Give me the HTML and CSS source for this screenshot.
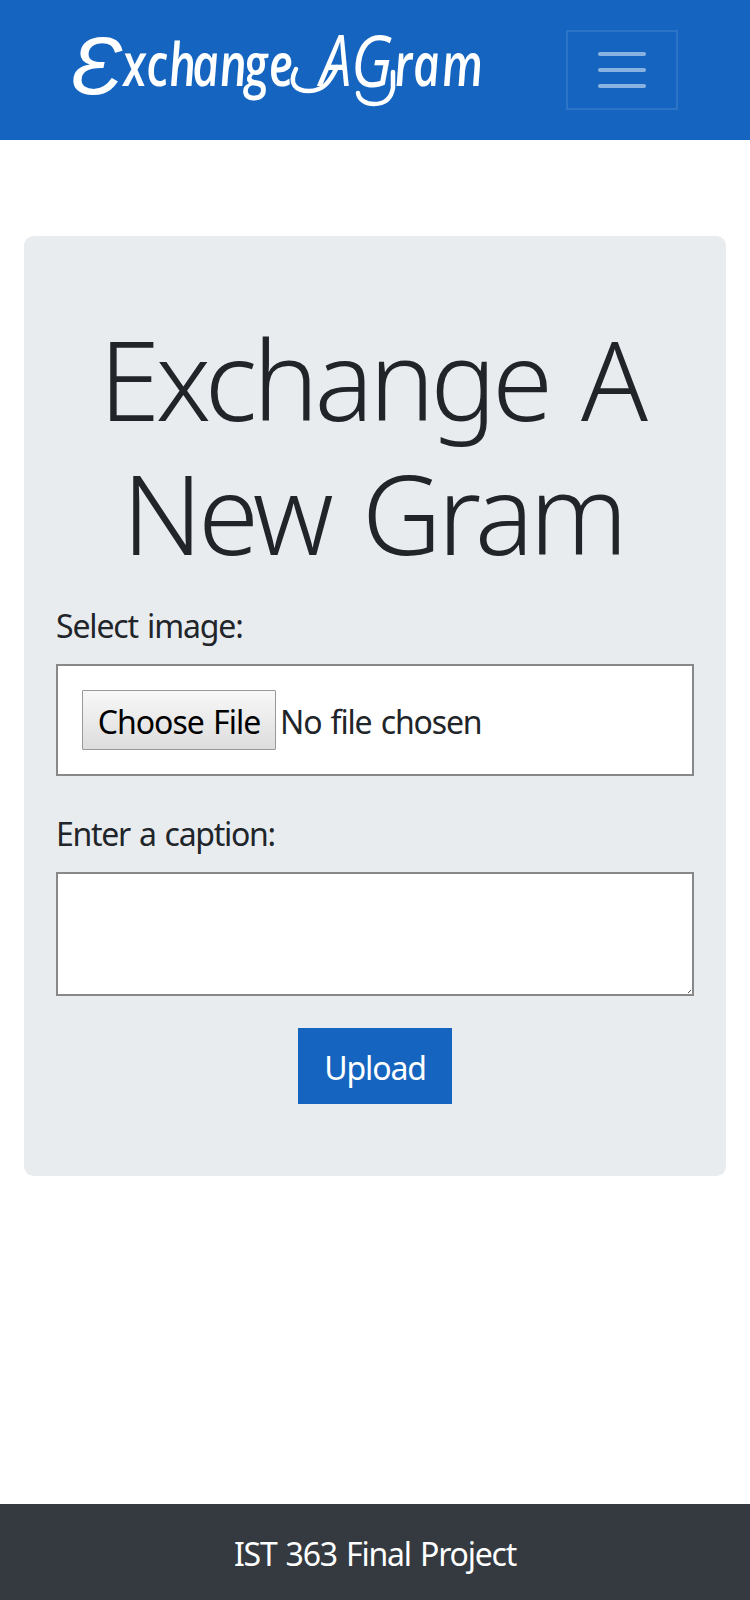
FILE: index.html
```html
<!DOCTYPE html>
<html lang="en">
<head>
<meta charset="utf-8">
<title>ExchangeAGram</title>
<link rel="stylesheet" href="styles.css">
</head>
<body>
<nav class="navbar">
  <a class="brand" href="#" aria-label="ExchangeAGram">
    <svg class="logo" width="412" height="76" viewBox="70 32 412 76">
      <g class="wordmark">
        <text class="cap-e" transform="translate(70 94) scale(1.08 1.03)">Ɛ</text>
        <text class="lower" transform="translate(0 86) skewX(5) scale(.78 1)" x="159 189 218 248 283 314 346">xchange</text>
        <text class="cap-a" transform="translate(320 86) scale(.78 1)">A</text>
        <text class="cap-g" transform="translate(351 87) scale(.85 1)">G</text>
        <text class="lower" transform="translate(0 86) skewX(5) scale(.78 1)" x="507 531 568">ram</text>
      </g>
      <path class="swash" d="M296 69C288 84 296 91 309 91C323 91 330 82 337 67"/>
      <path class="swash" d="M393 72V88C391 100 384 104 374 104C366 104 359 100 358 93"/>
    </svg>
  </a>
  <button class="toggler" aria-label="Toggle navigation">
    <svg width="48" height="36" viewBox="0 0 48 36"><path class="bars" d="M2 2H46M2 18H46M2 34H46"/></svg>
  </button>
</nav>
<main class="jumbotron">
  <h1 class="title"><span class="title-a">Exchange A</span><br><span class="title-b">New Gram</span></h1>
  <form class="form">
    <label class="label label-image">Select image:</label>
    <div class="file">
      <button type="button" class="choose">Choose File</button>
      <span class="chosen">No file chosen</span>
    </div>
    <label class="label label-caption" for="caption">Enter a caption:</label>
    <div class="caption-wrap">
      <textarea id="caption" class="caption"></textarea>
      <svg class="grip" width="3" height="3" viewBox="0 0 3 3"><path d="M0 3L3 0" /></svg>
    </div>
    <button type="button" class="upload">Upload</button>
  </form>
</main>
<footer class="footer">IST 363 Final Project</footer>
</body>
</html>
```
FILE: styles.css
```css
* { box-sizing: border-box; }
body {
  margin: 0;
  min-height: 1600px;
  display: flex;
  flex-direction: column;
  background: #fff;
  color: #212529;
  font: 32px/48px "Noto Sans", "Open Sans", sans-serif;
}
button { font: inherit; margin: 0; padding: 0; border-radius: 0; }
svg { display: block; }
.navbar {
  height: 140px;
  padding: 30px 72px 0 70px;
  display: flex;
  justify-content: space-between;
  align-items: flex-start;
  background: #1565c0;
}
.brand { padding-top: 2px; }
.logo { overflow: visible; }
.wordmark { fill: #fff; font-family: "Open Sans", sans-serif; font-style: italic; font-weight: 600; }
.lower { font-size: 60px; }
.cap-e { font-size: 80px; font-weight: 400; }
.cap-a, .cap-g { font-size: 72px; font-weight: 400; }
.swash { fill: none; stroke: #fff; stroke-width: 4.5; stroke-linecap: round; }
.toggler {
  width: 112px;
  height: 80px;
  display: flex;
  justify-content: center;
  padding-top: 20px;
  background: none;
  border: 2px solid rgba(255, 255, 255, .1);
}
.bars { stroke: rgba(255, 255, 255, .5); stroke-width: 4; stroke-linecap: round; }
.jumbotron {
  height: 940px;
  margin: 96px 24px 0;
  padding: 75px 32px 0;
  border-radius: 9.6px;
  background: #e8ecef;
}
.title {
  margin: 0 0 22px;
  height: 269px;
  font-size: 110px;
  line-height: 134px;
  font-weight: 300;
  text-align: center;
  white-space: nowrap;
}
.title-a { margin-right: 7px; letter-spacing: -4.2px; word-spacing: 8px; }
.title-b { margin-right: 4px; letter-spacing: -4.1px; word-spacing: 8px; }
.form { display: flex; flex-direction: column; }
.label { height: 48px; margin-bottom: 14px; white-space: nowrap; }
.label-image { letter-spacing: -1.15px; word-spacing: 2px; }
.label-caption { margin-top: 34px; letter-spacing: -1.3px; word-spacing: 2px; }
.file {
  height: 112px;
  padding: 0 24px;
  display: flex;
  align-items: center;
  gap: 4px;
  border: 2px solid #888;
  background: #fff;
}
.choose {
  width: 194px;
  height: 60px;
  padding-top: 4px;
  border: 1px solid #999;
  border-radius: 1px;
  background: linear-gradient(#f8f8f8, #ddd);
  color: #000;
  letter-spacing: -1px;
  word-spacing: 2px;
  white-space: nowrap;
}
.chosen { padding-top: 4px; letter-spacing: -1.15px; word-spacing: 2px; }
.caption-wrap { position: relative; height: 124px; }
.caption {
  display: block;
  width: 100%;
  height: 124px;
  border: 2px solid #888;
  border-radius: 0;
  background: #fff;
  resize: none;
}
.grip { position: absolute; right: 3px; bottom: 3px; stroke: #555; }
.upload {
  align-self: center;
  width: 154px;
  height: 76px;
  margin-top: 32px;
  padding-top: 4px;
  border: 0;
  background: #1565c0;
  color: #fff;
  letter-spacing: -1.1px;
}
.footer {
  height: 96px;
  margin-top: auto;
  padding-top: 26px;
  background: #343a40;
  color: #fff;
  letter-spacing: -1.2px;
  word-spacing: 2px;
  text-align: center;
}
```
